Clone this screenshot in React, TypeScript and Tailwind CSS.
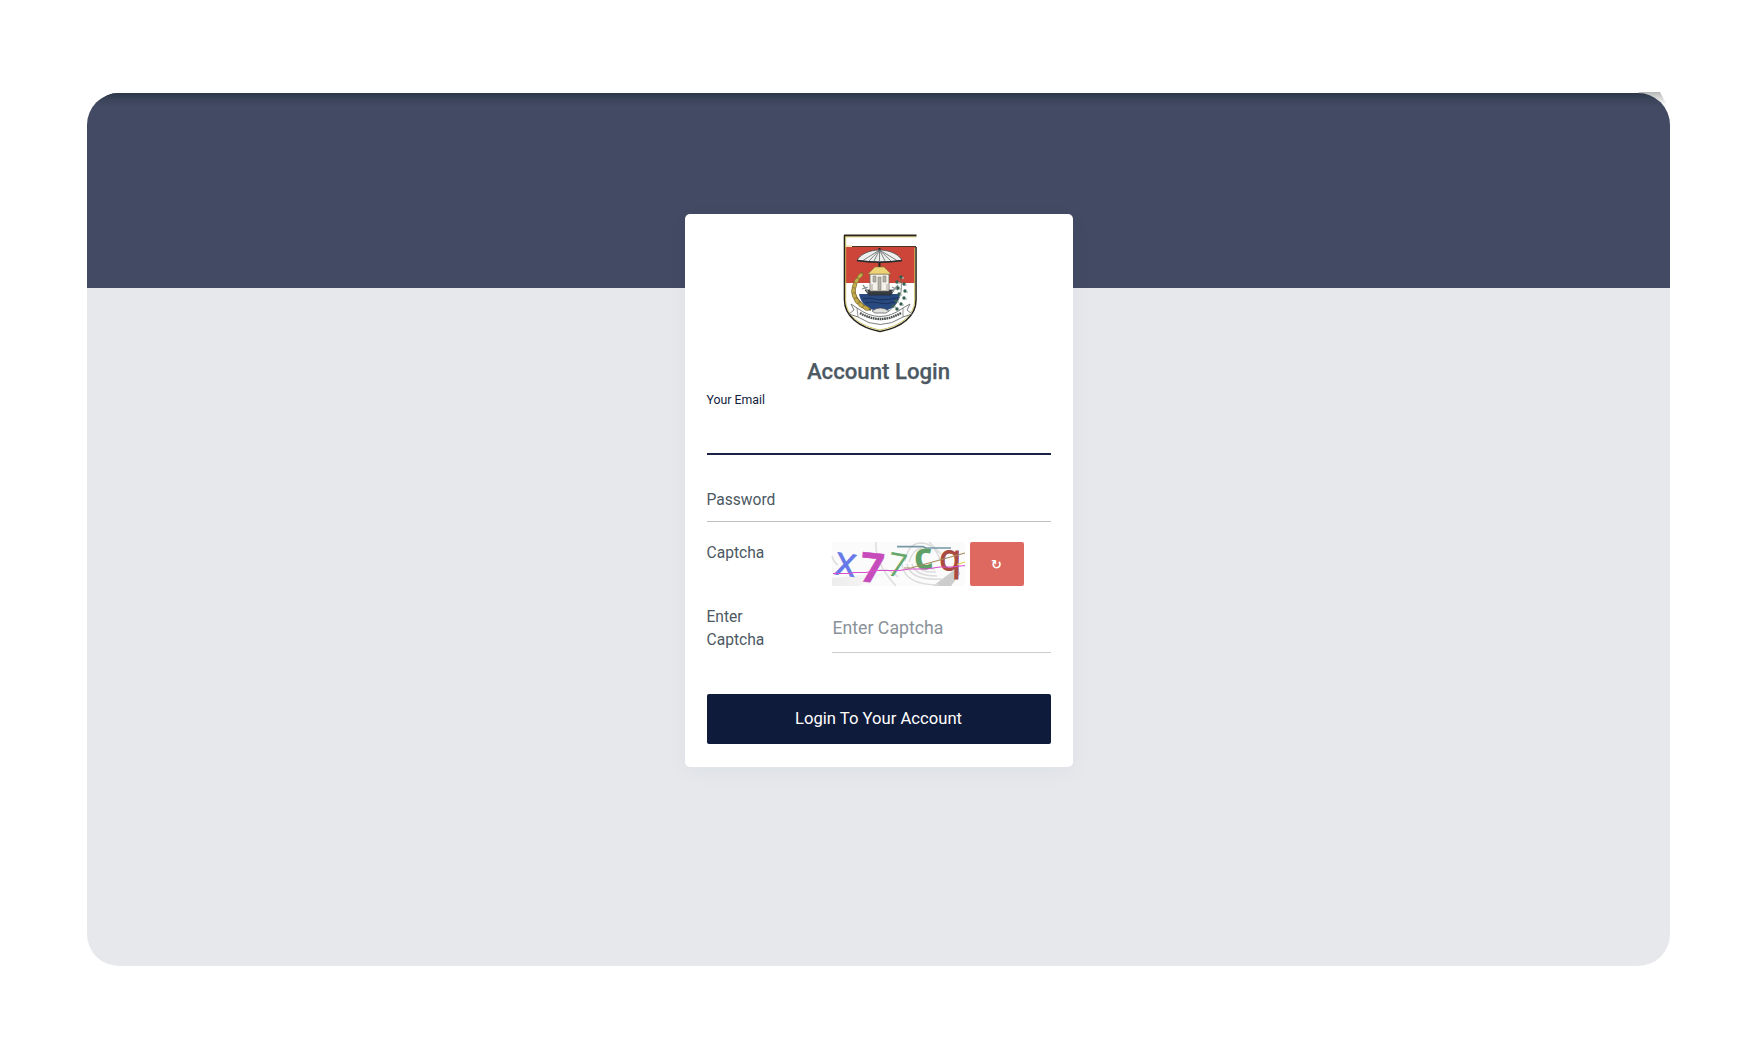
import React from "react";

function Crest() {
  const berries = [
    [58, 43], [54, 48], [61, 50], [55, 54], [62, 57], [56, 60], [61, 64], [53, 67], [58, 70], [50, 72], [54, 75],
  ];
  const grains = [
    [17, 42, -48], [13.5, 47, -58], [11.5, 52, -72], [10.5, 57, -88], [11.5, 62, 70], [14, 67, 56], [18, 71, 42], [23, 74, 25],
  ];
  return (
    <svg width="76" height="100" viewBox="0 0 76 100" className="block">
      <path d="M1.500 1.500H73V66C73 82 59 93.500 37.500 97.500C16 93.500 1.500 82 1.500 66Z" fill="#fff" />
      <path d="M2 13H72V49H2Z" fill="#cd4538" />
      <path d="M1.500 1.200V66C1.500 82 16 93.500 37 97.500C59 93.500 73 82 73 66V13" fill="none" stroke="#25231b" strokeWidth="1.600" />
      <path d="M2.700 2V66C2.700 81 17 92 37 96C58 92 71.700 81 71.700 66V14" fill="none" stroke="#c9bd5a" strokeWidth=".9" />
      <path d="M1 1.500H73.500" stroke="#292517" strokeWidth="1.800" />
      <path d="M2 3H73.500M2 12H9" stroke="#d7c75b" strokeWidth=".7" />
      <path d="M9 12.500H73" stroke="#4b3824" strokeWidth="1.200" />
      <path d="M36.500 14V38" stroke="#222" strokeWidth="2" />
      <path d="M14 26.500C17 20 27 16 36.500 16S56 20 59 26.500Q48 28 36.500 28T14 26.500Z" fill="#eef0ed" stroke="#4b4d4e" strokeWidth=".8" />
      <path d="M36.500 16L20 26.500M36.500 16L26 27M36.500 16L31 27M36.500 16V27M36.500 16L42 27M36.500 16L48 27M36.500 16L54 26.500" stroke="#626667" strokeWidth=".8" />
      <path d="M14 26.500Q36.500 30 59 26.500" fill="none" stroke="#25292b" strokeWidth="1.700" />
      <path d="M16 60C18 71 26 76 36 77C49 77 55 71 57 60Z" fill="#294981" />
      <path d="M20 65Q26 63 32 65T55 64M22 69Q29 67 36 69T52 68" fill="none" stroke="#1c3259" strokeWidth="1" />
      <path d="M22 56H51L48 61H26Z" fill="#363c41" stroke="#23292d" strokeWidth=".7" />
      <path d="M27 40H46V57H27Z" fill="#f3f1ea" stroke="#6e6a60" strokeWidth=".8" />
      <path d="M25 40L32 33H41L48 40Z" fill="#ebd477" stroke="#8a7543" strokeWidth=".6" />
      <path d="M30 42H33V48H30ZM40 42H43V48H40ZM35 43H38V56H35Z" fill="#b4b1a7" stroke="#747169" strokeWidth=".5" />
      <path d="M29 50V56M44 50V56" stroke="#aaa79e" />
      <path d="M20 51L25 58M19 55L25 53M49 58L55 51M49 53L55 56" stroke="#8e9393" strokeWidth="1.300" />
      <path d="M20 39C11 45 8 57 15 66Q20 73 28 76" fill="none" stroke="#70602e" strokeWidth="2.200" />
      {grains.map(([x, y, angle]) => (
        <ellipse key={y} cx={x} cy={y} rx="3.600" ry="2" fill="#c4ac4b" stroke="#76652a" strokeWidth=".6" transform={`rotate(${angle} ${x} ${y})`} />
      ))}
      <path d="M57 42C60 54 59 67 46 77" fill="none" stroke="#5d6e64" strokeWidth=".8" />
      {berries.map(([x, y]) => (
        <g key={`${x}-${y}`}>
          <circle cx={x} cy={y} r="1.700" fill="#355e51" />
          <circle cx={x + 2} cy={y + 1} r=".9" fill="#a9bab0" />
        </g>
      ))}
      <path d="M8 70L14 74Q37 91 60 74L67 70L64 76L69 80L60 83Q37 98 15 83L6 80L11 76Z" fill="#fff" stroke="#5c5e5b" strokeWidth=".8" />
      <path d="M14 74L15 83M60 74L60 83" stroke="#666" strokeWidth=".7" />
      <path d="M17 79Q37 91 58 79" fill="none" stroke="#4b504f" strokeWidth="2.400" strokeDasharray="1.700 .6" />
      <path d="M29 77Q37 71 46 77L43 79H32Z" fill="#e2e4df" stroke="#555" strokeWidth=".7" />
    </svg>
  );
}

function CaptchaImage() {
  return (
    <svg width="133" height="44" viewBox="0 0 133 44" className="block shrink-0 overflow-visible bg-[#fbfbfb]" fontFamily="Open Sans, sans-serif">
      <defs>
        <linearGradient id="captchaShade"><stop stopColor="#ededed" /><stop offset="1" stopColor="#f8f8f8" /></linearGradient>
      </defs>
      <path d="M0 44V36L55 31L27 44Z" fill="url(#captchaShade)" />
      <path d="M101 44L126 25L128 32L119 44Z" fill="#cdcdcd" />
      <path d="M0 14Q2 21 6 23M44 0Q42 20 64 44M47 28Q58 26 66 35M97 0L109 12" fill="none" stroke="#dedede" strokeWidth="1.600" />
      <g fill="none" stroke="#dcdcdc" strokeWidth="1.500">
        <path d="M73 19Q76 2 88 1Q103 1 108 18M77 20Q81 7 90 6" />
        <path d="M70 22Q72 43 107 43M75 22Q78 39 110 37M80 22Q83 34 105 34M86 23Q88 31 104 30M92 22Q95 27 103 27" />
      </g>
      <text x="0" y="0" transform="translate(1.500 32) rotate(8)" fontSize="41" fill="#6679e8" stroke="#6679e8" strokeWidth=".6">x</text>
      <text x="0" y="0" transform="translate(27 39) rotate(6)" fontSize="41" fontWeight="700" fill="#c64bbb" stroke="#c64bbb" strokeWidth=".7">7</text>
      <text x="0" y="0" transform="translate(54 33) rotate(10)" fontSize="33" fill="#66a86c">7</text>
      <text x="0" y="0" transform="translate(83 28) rotate(-5)" fontSize="37" fontWeight="700" fill="#609f65">c</text>
      <text x="0" y="0" transform="translate(107 28) rotate(1)" fontSize="36" fill="#a9493f" stroke="#a9493f" strokeWidth="1.100">q</text>
      <path d="M1 31.500H20L21 30.500H34L44 28.500H67L78 27H94L108 25H120L133 23.500" fill="none" stroke="#d94fce" strokeWidth="1.100" />
      <path d="M72 26H79L133 11" fill="none" stroke="#a68c60" strokeWidth="1.200" />
      <path d="M125 22.500L133 20" stroke="#e4d252" strokeWidth="1.200" />
      <path d="M65 4.700H91L94 6H119" fill="none" stroke="#7799a5" strokeWidth="1.700" />
    </svg>
  );
}

export default function App() {
  return (
    <main className="h-[1056px] w-[1746px] overflow-hidden bg-white pl-[87px] pt-[93px] font-['Roboto',sans-serif] text-[#4c5963]">
      <div className="relative h-[873px] w-[1583px]">
        <svg aria-hidden="true" width="32" height="14" viewBox="0 0 32 14" className="absolute right-0 top-[-1px]">
          <defs><linearGradient id="cornerShadow" x2="0" y2="1"><stop stopColor="#b5b6b6" /><stop offset="1" stopColor="#fff" /></linearGradient></defs>
          <path d="M0 0H22L29 13H17Z" fill="url(#cornerShadow)" />
        </svg>
        <svg aria-hidden="true" width="32" height="12" viewBox="0 0 32 12" className="absolute left-0 top-0">
          <path d="M11 8L21 2Q25 0 32 0V8Z" fill="#343e53" />
        </svg>
        <div className="relative flex h-full justify-center overflow-hidden rounded-[32px] bg-[linear-gradient(180deg,#2c3648_0px,#384257_5px,#434a64_13px,#434a64_195px,#e6e8ec_195px)] pt-[121px]">
          <section className="flex h-[553px] w-[388px] flex-col rounded-[5px] bg-white px-[22px] pt-5 shadow-[0_5px_22px_rgba(35,45,65,0.04)]">
            <div className="ml-[136px] self-start"><Crest /></div>
            <h1 className="mt-[24px] text-center text-[22.200px] font-medium leading-[27px] [-webkit-text-stroke:0.250px]">Account Login</h1>
            <label className="mt-[7px] block h-[63px] border-b-[2px] border-[#172244] text-[12.300px] leading-[16px] text-[#101c3d]">Your Email</label>
            <label className="mt-[34px] block h-[33px] border-b border-[#bfc2c4] text-[15.600px] leading-[22px]">Password</label>
            <div className="mt-[20px] flex h-[44px]">
              <span className="w-[125px] shrink-0 pt-px text-[15.600px] leading-[20px]">Captcha</span>
              <CaptchaImage />
              <button aria-label="Refresh captcha" className="ml-[5px] flex h-[44px] w-[54px] items-center justify-center rounded-[2px] bg-[#dd6961] text-white">
                <span className="font-['DejaVu_Sans',sans-serif] text-[13px] font-bold leading-none">↻</span>
              </button>
            </div>
            <div className="mt-[20px] flex h-[47px]">
              <label className="w-[125px] shrink-0 pr-10 text-[15.600px] leading-[23.300px]">Enter Captcha</label>
              <input placeholder="Enter Captcha" className="h-[47px] min-w-0 flex-1 border-b border-[#c9ccce] pb-[3px] pl-px text-[17.700px] leading-[21px] outline-none placeholder:text-[#8a9299] placeholder:opacity-100" />
            </div>
            <button className="mt-[41px] h-[50px] w-full shrink-0 rounded-[2px] bg-[#0f1b3a] text-[16.650px] text-white">Login To Your Account</button>
          </section>
        </div>
      </div>
    </main>
  );
}
